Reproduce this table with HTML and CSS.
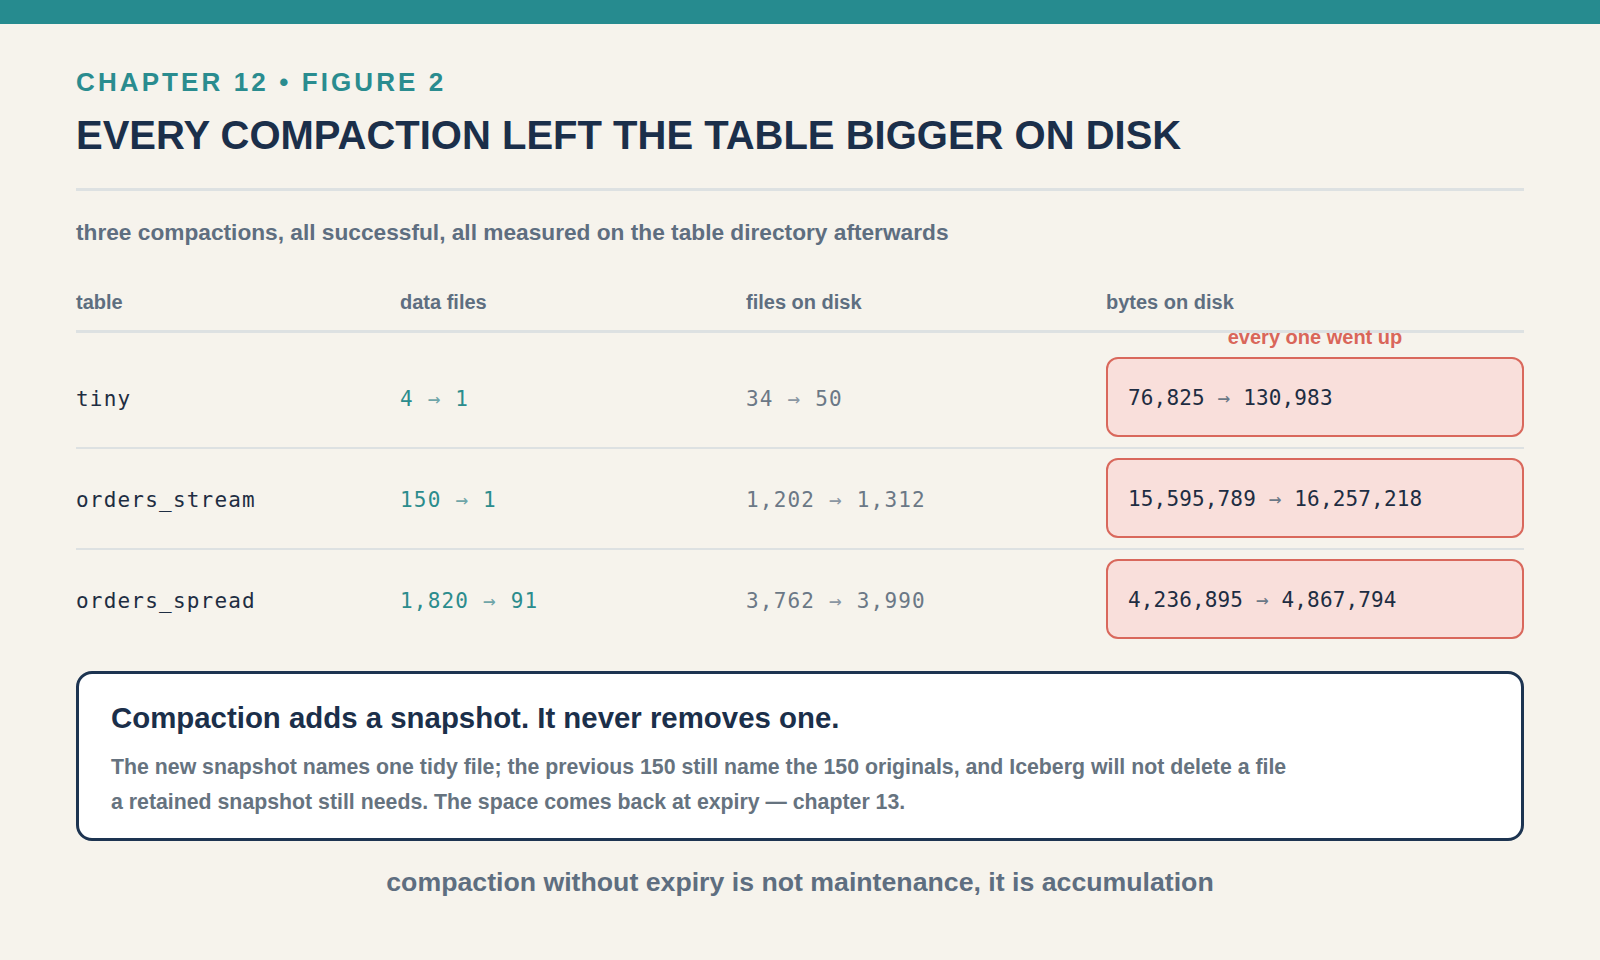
FILE: index.html
```html
<!DOCTYPE html>
<html lang="en">
<head>
<meta charset="utf-8">
<title>Every compaction left the table bigger on disk</title>
<link rel="stylesheet" href="styles.css">
</head>
<body>
<div class="topbar"></div>
<main class="page">
  <header class="head">
    <div class="kicker">CHAPTER 12 • FIGURE 2</div>
    <h1 class="title">EVERY COMPACTION LEFT THE TABLE BIGGER ON DISK</h1>
  </header>
  <hr class="rule">
  <p class="sub">three compactions, all successful, all measured on the table directory afterwards</p>

  <div class="table">
    <div class="thead">
      <div class="th">table</div>
      <div class="th">data files</div>
      <div class="th">files on disk</div>
      <div class="th">bytes on disk</div>
    </div>
    <div class="trow first">
      <div class="td name">tiny</div>
      <div class="td data">4 <span class="arr">→</span> 1</div>
      <div class="td files">34 <span class="arr">→</span> 50</div>
      <div class="td bytes">
        <span class="flag">every one went up</span>
        <div class="box">76,825 <span class="arr">→</span> 130,983</div>
      </div>
    </div>
    <div class="trow">
      <div class="td name">orders_stream</div>
      <div class="td data">150 <span class="arr">→</span> 1</div>
      <div class="td files">1,202 <span class="arr">→</span> 1,312</div>
      <div class="td bytes">
        <div class="box">15,595,789 <span class="arr">→</span> 16,257,218</div>
      </div>
    </div>
    <div class="trow last">
      <div class="td name">orders_spread</div>
      <div class="td data">1,820 <span class="arr">→</span> 91</div>
      <div class="td files">3,762 <span class="arr">→</span> 3,990</div>
      <div class="td bytes">
        <div class="box">4,236,895 <span class="arr">→</span> 4,867,794</div>
      </div>
    </div>
  </div>

  <section class="card">
    <h2 class="card-title">Compaction adds a snapshot. It never removes one.</h2>
    <p class="card-body">The new snapshot names one tidy file; the previous 150 still name the 150 originals, and Iceberg will not delete a file a retained snapshot still needs. The space comes back at expiry — chapter 13.</p>
  </section>

  <p class="footer">compaction without expiry is not maintenance, it is accumulation</p>
</main>
</body>
</html>
```

FILE: styles.css
```css
* { box-sizing: border-box; }

html, body {
  margin: 0;
  padding: 0;
}

body {
  background: #f6f3ec;
  font-family: "Liberation Sans", Arial, sans-serif;
  color: #1b2f4a;
  width: 1600px;
  height: 960px;
  overflow: hidden;
}

.topbar {
  height: 24px;
  background: #268b8f;
}

.page {
  padding: 0 76px;
}

.kicker {
  margin-top: 43px;
  font-size: 26px;
  line-height: 30px;
  font-weight: 700;
  letter-spacing: 3.1px;
  color: #2a8c8f;
}

.title {
  margin: 14px 0 0;
  font-size: 40px;
  line-height: 48px;
  font-weight: 700;
  color: #1b2f4a;
}

.rule {
  margin: 29px 0 0;
  border: 0;
  height: 3px;
  background: #dde1e2;
}

.sub {
  margin: 28px 0 0;
  font-size: 22.7px;
  line-height: 26px;
  font-weight: 700;
  color: #5e6e80;
}

.table {
  margin-top: 45px;
}

.thead,
.trow {
  display: grid;
  grid-template-columns: 324px 346px 360px 1fr;
  align-items: center;
}

.thead {
  padding-bottom: 16px;
  border-bottom: 3px solid #dde1e2;
}

.th {
  font-size: 20px;
  line-height: 24px;
  font-weight: 700;
  color: #5e6e80;
}

.trow {
  padding: 9px 0 10px;
  border-bottom: 2px solid #dde1e2;
}

.trow.first {
  padding-top: 24px;
}

.trow.last {
  border-bottom: 0;
}

.td {
  font-family: "DejaVu Sans Mono", "Liberation Mono", monospace;
  font-size: 21px;
  letter-spacing: 1.2px;
  white-space: nowrap;
}

.name,
.data,
.files {
  padding-top: 4px;
}

.name { color: #1e2d42; }
.data { color: #2b8c8d; }
.files { color: #6b7886; }

.arr {
  color: #8a96a2;
}

.data .arr { color: #6fa5a8; }

.bytes {
  position: relative;
}

.flag {
  position: absolute;
  left: 0;
  right: 0;
  bottom: calc(100% + 10px);
  text-align: center;
  font-family: "Liberation Sans", Arial, sans-serif;
  font-size: 20px;
  line-height: 20px;
  font-weight: 700;
  letter-spacing: 0;
  color: #d9665a;
}

.box {
  height: 80px;
  padding: 3px 20px 0;
  line-height: 73px;
  border: 2px solid #d9685c;
  border-radius: 12px;
  background: #f9dfdb;
  color: #1e2d42;
  letter-spacing: 0.15px;
}

.box .arr { color: #6b7886; }

.card {
  margin-top: 22px;
  height: 170px;
  padding: 27px 32px 0;
  border: 3px solid #1d3451;
  border-radius: 16px;
  background: #ffffff;
}

.card-title {
  margin: 0;
  font-size: 29.4px;
  line-height: 34px;
  font-weight: 700;
  color: #1b2f4a;
}

.card-body {
  margin: 15px 0 0;
  max-width: 1190px;
  font-size: 21.3px;
  line-height: 35px;
  font-weight: 700;
  color: #66737f;
}

.footer {
  margin: 26px 0 0;
  text-align: center;
  font-size: 26.7px;
  line-height: 30px;
  font-weight: 700;
  color: #5e6e80;
}
```
